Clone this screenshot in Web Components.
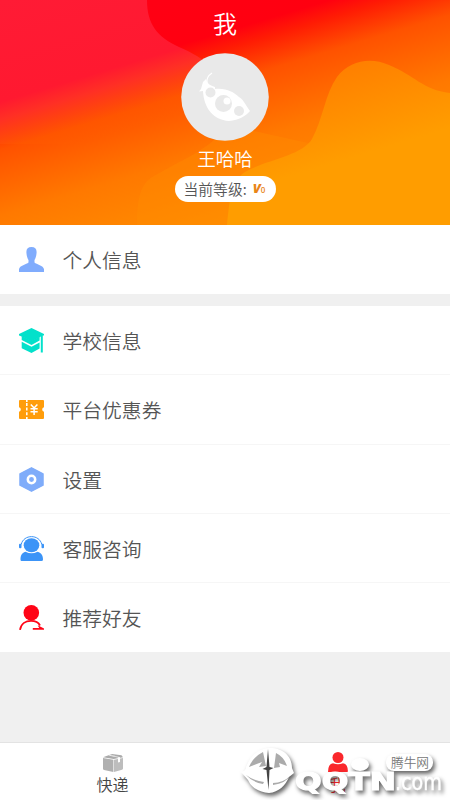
<!DOCTYPE html>
<html lang="zh-CN"><head><meta charset="utf-8"><title>我</title>
<style>html,body{margin:0;height:100%;overflow:hidden}body{font-family:"Noto Sans CJK SC DemiLight","Noto Sans CJK SC",sans-serif;font-weight:350;background:#f0f0f0}</style></head>
<body><mine-page></mine-page>
<script>
const define=(name,html)=>{
  const t=document.createElement('template');t.innerHTML=html;
  customElements.define(name,class extends HTMLElement{
    constructor(){super();this.attachShadow({mode:'open'}).append(t.content.cloneNode(true));}
  });
};
const icons={
 person:'<path fill="#80acfd" d="M12.500 0C16 0 17.800 2 17.600 5.500 17.400 9 16.500 11.500 15.500 13v2.500c2 1.900 9 2.900 9.500 6.800V25H0v-2.700C.5 18.400 7.500 17.400 9.500 15.500V13C8.500 11.500 7.600 9 7.400 5.500 7.200 2 9 0 12.500 0z"/>',
 school:'<g fill="#03e1cb"><path d="M12.500 0 25 6v1.500h-1.200V24.500h-2V8.600L12.500 13.500 2.700 8.600 0 7.500V6z"/><path d="M2.700 8 12.500 12.800 20.600 8.600V12.500L12.500 17 2.700 12z"/><path d="M2.700 13.800 12.500 18.700 20.600 14.500v6.100L12.500 25l-9.800-4.700z"/></g>',
 coupon:'<path fill="#ff9d0b" d="M1 3h6v2h1.600V3H24q1 0 1 1v6.300a2.300 2.300 0 0 0 0 4.500V21q0 1-1 1H8.600v-2H7v2H1q-1 0-1-1v-6.200a2.300 2.300 0 0 0 0-4.500V4q0-1 1-1z"/><path d="M7.800 6v3m0 1.600v3m0 1.600v3M11.800 7.500l3.300 3.500 3.300-3.500M11.500 11.800h7.200M11.500 14.700h7.200M15.100 11v7" fill="none" stroke="#fff" stroke-width="1.500"/>',
 settings:'<path fill="#7facfa" stroke="#7facfa" stroke-width="1.500" stroke-linejoin="round" d="M12.500.8 24 6.800v11.400l-11.500 6L1 18.200V6.800z"/><circle cx="12.500" cy="12.500" r="3.700" fill="none" stroke="#fff" stroke-width="2.500"/>',
 service:'<g fill="#3c94f7"><ellipse cx="12.500" cy="9.300" rx="7.800" ry="7"/><path d="M6.500 15.700q6 3.200 12 0c4.200 1 5.500 4.300 5.500 7.800q0 1.500-1.500 1.500h-20Q1.500 25 1.500 23.500c0-3.500 1-6.800 5-7.800z"/><rect y="7.800" width="2.500" height="4.500" rx="1"/><rect x="22.500" y="7.800" width="2.500" height="4.500" rx="1"/></g><path d="M2.200 8.500C4.500-2 20.500-2 22.800 8.500" fill="none" stroke="#3c94f7" stroke-width="1"/>',
 friend:'<circle cx="12.300" cy="7.800" r="7.800" fill="#ff0416"/><path d="M1 24.800C2 18.500 7 15.900 12 15.900c4 0 7.500 1.500 9 4.600" fill="none" stroke="#ff0416" stroke-width="1.800"/><path d="M13.800 22.900h6.400l-1.500-2.700 6.300 3.300v1.300H13.800z" fill="#ff0416"/>',
 parcel:'<path fill="#aaa" d="M0 3.200 9 0l9.500 1.300L20 3.200 10.700 5z"/><path fill="#b0b0b0" d="M0 4 10.400 5.800V18L1 16Q0 15.700 0 14.800z"/><path fill="#bdbdbd" d="M11 5.800 20 4v10.500q0 1-1 1.200L11 18z"/><path d="m5.500 1.500 9.500 2V8.500l2-.5V3.300L8 .7z" fill="#fff"/><path d="m7 1.200 8.500 2 1-.3L8 .9z" fill="#bbb"/>',
 me:'<circle cx="10" cy="5.500" r="5.500" fill="#fa282c"/><path fill="#fa282c" d="M0 20q0-8 5-8.700 5 2 10 0 5 .7 5 8.700z"/>'
};
customElements.define('ui-icon',class extends HTMLElement{
 constructor(){super();this.attachShadow({mode:'open'});}
 connectedCallback(){this.shadowRoot.innerHTML=`<style>:host{display:block;width:25px;height:25px}svg{display:block;width:100%;height:100%;overflow:visible}</style><svg viewBox="${this.getAttribute('box')||'0 0 25 25'}">${icons[this.getAttribute('name')]}</svg>`;}
});
define('profile-header',`<style>
:host{display:block;height:225px;position:relative;overflow:hidden;color:#fff}
.bg{position:absolute;inset:0;width:450px;height:225px}
.col{position:relative;display:flex;flex-direction:column;align-items:center}
h1{margin:5px 0 0;font-size:24px;line-height:35px;font-weight:400}
.avatar{width:88px;height:88px;margin-top:13px;display:block}
.name{font-size:18.500px;line-height:26px;margin-top:4px;font-weight:400}
.pill{box-sizing:border-box;width:101px;height:26px;margin-top:5px;padding-left:9px;border-radius:13px;background:#fff;color:#555;font-size:14.800px;line-height:25px;display:flex;white-space:nowrap}
.v{font:italic 800 13px/24px "Open Sans",sans-serif;color:#e98518;margin-left:6px}.v small{font-size:8px;font-style:normal;font-weight:600}
</style>
<svg class="bg" viewBox="0 0 450 225"><defs>
<linearGradient id="a" gradientUnits="userSpaceOnUse" x1="0" y1="0" x2="82.600" y2="275.200"><stop offset="0" stop-color="#ff0018"/><stop offset=".33" stop-color="#ff0010"/><stop offset=".39" stop-color="#ff1c04"/><stop offset=".5" stop-color="#ff5200"/><stop offset=".72" stop-color="#ff7900"/><stop offset="1" stop-color="#ff9000"/></linearGradient>
<linearGradient id="b" gradientUnits="userSpaceOnUse" x1="0" y1="0" x2="82.600" y2="275.200"><stop offset="0" stop-color="#ff1b35"/><stop offset=".34" stop-color="#ff1930"/><stop offset=".4" stop-color="#ff3024"/><stop offset=".5" stop-color="#ff5700" stop-opacity=".7"/><stop offset=".56" stop-color="#ff6000" stop-opacity="0"/></linearGradient>
<linearGradient id="c" gradientUnits="userSpaceOnUse" x1="340" y1="60" x2="368" y2="153"><stop stop-color="#ff7d00"/><stop offset=".4" stop-color="#ff8a00"/><stop offset="1" stop-color="#ff9d00"/></linearGradient></defs>
<path fill="url(#a)" d="M0 0h450v225H0z"/><path fill="url(#b)" d="M0 0h147c0 24 10 37 32 47 28 12 42 25 42 47l-8 50H0z"/>
<path fill="#ff8b00" opacity=".4" d="M137 225c0-25 3-42 17-49 35-20 58-28 73-51l90 20v80z"/>
<path fill="url(#c)" d="M227 225c3-27 4-44 18-53 20-12 57-16 67-33 11-20 13-45 25-62 13-17 34-20 52-12 25 10 34 25 61 28v132z"/></svg>
<div class="col"><h1>我</h1>
<svg class="avatar" viewBox="0 0 88 88"><circle cx="44" cy="44" r="43.800" fill="#e9e9e9"/><path fill="none" stroke="#fff" stroke-width="1.200" d="M31 20q-6 4-5 10"/><path fill="#fff" d="M25 26c1 4 3 6 9 8v2c12-1 18 3 24 8 4 2 6 7 11 14-4 5-11 9-21 10C32 67 23 55 22 38l-4 .5 2-2.500 2-7z"/><g fill="#e9e9e9"><circle cx="29.500" cy="39.500" r="5"/><circle cx="42.500" cy="50.500" r="8.500"/><circle cx="58" cy="58" r="5"/></g><circle cx="46" cy="48" r="3.500" fill="#fff"/></svg>
<div class="name">王哈哈</div><div class="pill"><span>当前等级:</span><span class="v">V<small>0</small></span></div></div>`);
define('menu-row',`<style>:host{display:flex;align-items:center;gap:19px;height:69.200px;box-sizing:border-box;padding:1px 0 0 18.500px;background:#fff;color:#555;font-size:19.800px;border-bottom:1px solid #f6f6f6}</style><slot name="icon"></slot><span><slot></slot></span>`);
define('menu-group',`<style>:host{display:flex;flex-direction:column;background:#fff}::slotted(:last-child){border-bottom-color:#fff}</style><slot></slot>`);
define('tab-item',`<style>:host{display:flex;flex:1;flex-direction:column;align-items:center;font-size:16px;line-height:24px;color:#444}</style><slot name="icon"></slot><span><slot></slot></span>`);
define('tab-bar',`<style>:host{display:flex;height:58px;box-sizing:border-box;border-top:1px solid #e3e3e3;background:#fff}</style><slot></slot>`);
define('site-mark',`<style>:host{position:absolute;left:230px;top:740px;width:220px;height:60px;overflow:hidden}svg{display:block;overflow:visible}.s{filter:drop-shadow(2px 3px 2px #0009)}</style>
<svg width="220" height="60" viewBox="230 740 220 60"><g class="s" fill="#fff">
<path d="M241 772q5-1 5-5c5-13 14-19 24-19 13 0 22 8 22 20l2 5-5 4c-4 9-10 15-20 16-11-1-18-6-21-13z"/>
<ellipse cx="360" cy="764.500" rx="9" ry="6.500"/><rect x="386" y="754" width="47" height="17" rx="8"/>
<text x="295" y="790" textLength="101" lengthAdjust="spacingAndGlyphs" font-family="DejaVu Sans" font-weight="700" font-size="25" stroke="#fff" stroke-width="1.200">QQTN</text>
<text x="395" y="790" textLength="47" lengthAdjust="spacingAndGlyphs" font-family="DejaVu Sans" font-weight="400" font-size="23" stroke="#fff" stroke-width=".4">.com</text></g>
<path d="M263 752q-10 5-14 15l13-5-3 5 7-1zM276 753q8 4 11 13l-8-3 1 4-6 1zM246 775q8 6 18 7l-1 2q-11-2-17-9zM273 783q10 0 17-7-4 7-17 9z" fill="#888" opacity=".7"/><path d="m268 749 1.500 18 4 1-4 2-1 20-2-20-4-1 4-2z" fill="#444"/>
<text x="391" y="767" font-family="Noto Sans CJK SC" font-size="12.700" fill="#777">腾牛网</text></svg>`);
define('mine-page',`<style>:host{display:flex;flex-direction:column;width:450px;height:800px;position:relative;background:#f0f0f0;overflow:hidden}menu-group+menu-group{margin-top:12px}tab-bar{margin-top:auto}tab-item ui-icon{width:20px;height:18px;margin:11px 0 0}tab-item.me{color:#fa282c}tab-item.me ui-icon{height:20px;margin-top:9px}</style>
<profile-header></profile-header>
<menu-group><menu-row><ui-icon slot="icon" name="person"></ui-icon>个人信息</menu-row></menu-group>
<menu-group><menu-row><ui-icon slot="icon" name="school"></ui-icon>学校信息</menu-row><menu-row><ui-icon slot="icon" name="coupon"></ui-icon>平台优惠券</menu-row><menu-row><ui-icon slot="icon" name="settings"></ui-icon>设置</menu-row><menu-row><ui-icon slot="icon" name="service"></ui-icon>客服咨询</menu-row><menu-row><ui-icon slot="icon" name="friend"></ui-icon>推荐好友</menu-row></menu-group>
<tab-bar><tab-item><ui-icon slot="icon" name="parcel" box="0 0 20 18"></ui-icon>快递</tab-item><tab-item class="me"><ui-icon slot="icon" name="me" box="0 0 20 20"></ui-icon>我</tab-item></tab-bar>
<site-mark></site-mark>`);
</script></body></html>
